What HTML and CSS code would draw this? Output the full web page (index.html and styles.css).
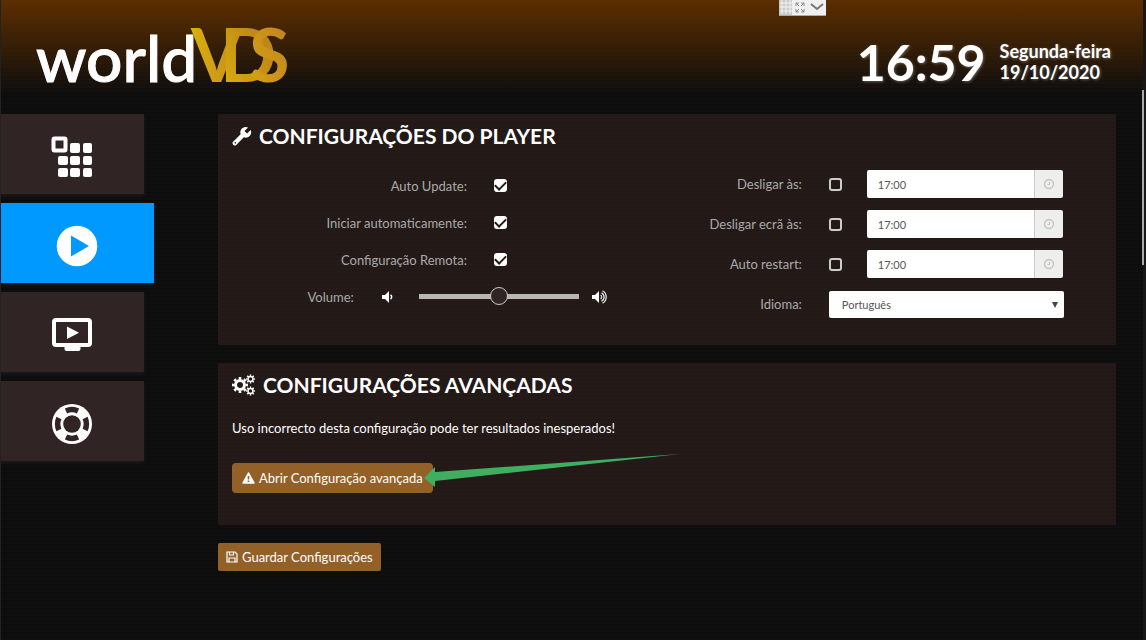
FILE: index.html
```html
<!DOCTYPE html>
<html lang="pt">
<head>
    <meta charset="utf-8">
    <title>worldVDS Player</title>
    <link rel="stylesheet" href="styles.css">
</head>
<body>

<div class="window-bar">
    <svg width="47" height="16" viewBox="0 0 47 16">
        <rect width="47" height="16" fill="#f0f0f0"/>
        <rect width="13" height="16" fill="#c9c9c9"/>
        <path d="M3 0v14M7 0v14M11 0v14M1 3h12M1 7h12M1 11h12" stroke="#f4f4f4" stroke-width="1"/>
        <path d="M17 6V3h3M22 3h3v3M25 9v3h-3M20 12h-3V9M17 3l3 3M25 3l-3 3M25 12l-3-3M17 12l3-3" fill="none" stroke="#8a8a8a"/>
        <path d="M32 4l6 5 6-5" fill="none" stroke="#777" stroke-width="2"/>
        <path d="M0 15.500h47" stroke="#aaa"/>
    </svg>
</div>

<header class="header">
    <svg class="logo" width="256" height="64" viewBox="0 0 256 64" role="img" aria-label="worldVDS">
        <defs>
            <linearGradient id="goldV" x1="0" y1="0" x2="1" y2="0">
                <stop offset="0" stop-color="#d9b00c"/>
                <stop offset="1" stop-color="#c48a1c"/>
            </linearGradient>
            <linearGradient id="goldD" x1="0" y1="1" x2="1" y2="0">
                <stop offset="0" stop-color="#ddb20a"/>
                <stop offset="1" stop-color="#b3751c"/>
            </linearGradient>
            <linearGradient id="goldS" x1="0" y1="1" x2="1" y2="0">
                <stop offset="0" stop-color="#d6a610"/>
                <stop offset="1" stop-color="#bf7f22"/>
            </linearGradient>
        </defs>
        <text class="logo-world" x="0" y="58">world</text>
        <text class="logo-vds" x="155" y="58" fill="url(#goldV)">V</text>
        <text class="logo-vds" x="184" y="58" fill="url(#goldD)">D</text>
        <text class="logo-vds" x="213" y="58" fill="url(#goldS)">S</text>
    </svg>
    <div class="datetime">
        <div class="clock">16:59</div>
        <div class="date">Segunda-feira<br>19/10/2020</div>
    </div>
</header>

<div class="layout">
    <nav class="menu">
        <a href="#apps" class="menu-item" aria-label="Apps">
            <svg width="42" height="42" viewBox="0 0 42 42" fill="#fff">
                <rect x="2.500" y="2.500" width="12" height="12" rx="1" fill="none" stroke="#fff" stroke-width="4"/>
                <rect x="19" y="7" width="10" height="10" rx="2"/>
                <rect x="32" y="7" width="9" height="10" rx="2"/>
                <rect x="7" y="20" width="10" height="9" rx="2"/>
                <rect x="19" y="20" width="10" height="9" rx="2"/>
                <rect x="32" y="20" width="9" height="9" rx="2"/>
                <rect x="7" y="32" width="10" height="9" rx="2"/>
                <rect x="19" y="32" width="10" height="9" rx="2"/>
                <rect x="32" y="32" width="9" height="9" rx="2"/>
            </svg>
        </a>
        <a href="#player" class="menu-item active" aria-label="Player">
            <svg width="42" height="42" viewBox="0 0 42 42">
                <circle cx="21" cy="21" r="20.300" fill="#fff"/>
                <path d="M15 10.500v21L33 21z" fill="#0099ff"/>
            </svg>
        </a>
        <a href="#tv" class="menu-item" aria-label="TV">
            <svg width="42" height="42" viewBox="0 0 42 42" fill="#fff">
                <rect x="3" y="6" width="36" height="25" rx="2" fill="none" stroke="#fff" stroke-width="4"/>
                <path d="M13.500 32h16v3a2 2 0 0 1-2 2h-12a2 2 0 0 1-2-2z"/>
                <path d="M16 12.500v12.500L28 18.700z"/>
            </svg>
        </a>
        <a href="#help" class="menu-item" aria-label="Ajuda">
            <svg width="42" height="42" viewBox="0 0 42 42">
                <circle cx="21" cy="21" r="20" fill="#fff"/>
                <circle cx="21" cy="21" r="8.800" fill="#312424"/>
                <circle cx="21" cy="21" r="14.400" fill="none" stroke="#312424" stroke-width="5.500" pathLength="80" stroke-dasharray="11 9" stroke-dashoffset="5.500"/>
            </svg>
        </a>
    </nav>

    <main class="content">
        <section class="panel">
            <h2>
                <svg width="20" height="20" viewBox="0 0 24 24">
                    <path fill="#fff" d="M1.300 19l9.100-9.100c-.9-2.300-.4-5 1.500-6.900 2-2 5-2.400 7.400-1.300L15 6l3 3 4.400-4.300c1.200 2.400.7 5.400-1.300 7.400-1.900 1.900-4.600 2.400-6.900 1.500l-9.100 9.100c-.9.900-2.300.9-3.200 0l-.6-.6c-.9-.9-.9-2.200 0-3.100z"/>
                    <circle cx="3.900" cy="20.200" r="1" fill="#231a18"/>
                </svg>
                CONFIGURAÇÕES DO PLAYER
            </h2>
            <form class="settings">
                <div class="col-left">
                    <div class="row">
                        <label for="autoUpdate">Auto Update:</label>
                        <input type="checkbox" id="autoUpdate" checked>
                    </div>
                    <div class="row">
                        <label for="autoStart">Iniciar automaticamente:</label>
                        <input type="checkbox" id="autoStart" checked>
                    </div>
                    <div class="row">
                        <label for="remoteConfig">Configuração Remota:</label>
                        <input type="checkbox" id="remoteConfig" checked>
                    </div>
                    <div class="row row-volume">
                        <label for="volume">Volume:</label>
                        <svg width="14" height="14" viewBox="0 0 14 14">
                            <path d="M1 5h3l4-4v12l-4-4H1z" fill="#fff"/>
                            <path d="M9.500 5a2.300 2.300 0 0 1 0 4" fill="none" stroke="#fff" stroke-width="1.500"/>
                        </svg>
                        <input type="range" id="volume" min="0" max="100" value="50">
                        <svg width="18" height="14" viewBox="0 0 18 14">
                            <path d="M1 5h3l4-4v12l-4-4H1z" fill="#fff"/>
                            <path d="M9.500 5a2.300 2.300 0 0 1 0 4M10.500 2.800a4.700 4.700 0 0 1 0 8.400M11.500.7a7.200 7.200 0 0 1 0 12.600" fill="none" stroke="#ddd" stroke-width="1.300"/>
                        </svg>
                    </div>
                </div>
                <div class="col-right">
                    <div class="row">
                        <label for="turnOff">Desligar às:</label>
                        <input type="checkbox" id="turnOff">
                        <div class="time">
                            <input type="text" value="17:00" aria-label="Hora de desligar">
                            <span class="addon"><svg width="12" height="12" viewBox="0 0 12 12" fill="none" stroke="#c4c4be"><circle cx="6" cy="6" r="4.500" stroke-width="1.300"/><path d="M6.500 3.500v3H4.500"/></svg></span>
                        </div>
                    </div>
                    <div class="row">
                        <label for="screenOff">Desligar ecrã às:</label>
                        <input type="checkbox" id="screenOff">
                        <div class="time">
                            <input type="text" value="17:00" aria-label="Hora de desligar ecrã">
                            <span class="addon"><svg width="12" height="12" viewBox="0 0 12 12" fill="none" stroke="#c4c4be"><circle cx="6" cy="6" r="4.500" stroke-width="1.300"/><path d="M6.500 3.500v3H4.500"/></svg></span>
                        </div>
                    </div>
                    <div class="row">
                        <label for="autoRestart">Auto restart:</label>
                        <input type="checkbox" id="autoRestart">
                        <div class="time">
                            <input type="text" value="17:00" aria-label="Hora de restart">
                            <span class="addon"><svg width="12" height="12" viewBox="0 0 12 12" fill="none" stroke="#c4c4be"><circle cx="6" cy="6" r="4.500" stroke-width="1.300"/><path d="M6.500 3.500v3H4.500"/></svg></span>
                        </div>
                    </div>
                    <div class="row">
                        <label for="language">Idioma:</label>
                        <div class="select">
                            <select id="language">
                                <option>Português</option>
                            </select>
                        </div>
                    </div>
                </div>
            </form>
        </section>

        <section class="panel panel-advanced">
            <h2>
                <svg width="24" height="22" viewBox="0 0 24 22" fill="none" stroke="#fff">
                    <circle cx="8" cy="11" r="4.500" stroke-width="3"/>
                    <circle cx="8" cy="11" r="6.800" stroke-width="2.400" pathLength="64" stroke-dasharray="4 4" stroke-dashoffset="2"/>
                    <circle cx="18.500" cy="5" r="2.500" stroke-width="1.500"/>
                    <circle cx="18.500" cy="5" r="3.800" stroke-width="1.600" pathLength="64" stroke-dasharray="4 4" stroke-dashoffset="2"/>
                    <circle cx="18.500" cy="17" r="2.500" stroke-width="1.500"/>
                    <circle cx="18.500" cy="17" r="3.800" stroke-width="1.600" pathLength="64" stroke-dasharray="4 4" stroke-dashoffset="2"/>
                </svg>
                CONFIGURAÇÕES AVANÇADAS
            </h2>
            <p>Uso incorrecto desta configuração pode ter resultados inesperados!</p>
            <div class="advanced">
                <button type="button" class="btn btn-advanced">
                    <svg width="13" height="12" viewBox="0 0 13 12">
                        <path d="M6.500 1L12 11H1z" fill="#fff" stroke="#fff" stroke-width="1.500" stroke-linejoin="round"/>
                        <path d="M6.500 4v3.500M6.500 8.500v1.500" stroke="#936027" stroke-width="1.600"/>
                    </svg>
                    Abrir Configuração avançada
                </button>
                <svg class="arrow" width="258" height="36" viewBox="0 0 258 36">
                    <path d="M0 25L11 14v5L256 1 11 28v6z" fill="#3fae60"/>
                </svg>
            </div>
        </section>

        <button type="button" class="btn">
            <svg width="12" height="12" viewBox="0 0 12 12" fill="none" stroke="#fff" stroke-width="1.200">
                <path d="M1 1h8l2 2v8H1zM3.500 1v3h4V1M3 11V7h6v4"/>
            </svg>
            Guardar Configurações
        </button>
    </main>
</div>

<div class="scrollbar"></div>

</body>
</html>
```
FILE: styles.css
```css
* {
    box-sizing: border-box;
}

body {
    margin: 0;
    min-height: 100vh;
    border-left: 1px solid #222;
    border-right: 3px solid #171717;
    background-color: #0e0e0e;
    background-image:
        linear-gradient(#5c2e00, rgba(14, 14, 14, 0) 94px),
        repeating-linear-gradient(#0c0c0c 0, #0c0c0c 1px, #0f0f0f 2px, #0f0f0f 4px);
    color: #fff;
    font-family: Lato, sans-serif;
    font-size: 13px;
}

.window-bar {
    position: absolute;
    top: 0;
    left: 68%;
    height: 16px;
}

svg {
    flex: none;
}

.header {
    display: flex;
    justify-content: space-between;
    align-items: flex-start;
    height: 114px;
    padding: 24px 32px 0 35px;
}

.logo {
    overflow: visible;
}

.logo-world {
    font-family: "Lato Medium", Lato, sans-serif;
    font-size: 64px;
    fill: #fff;
    stroke: #fff;
    stroke-width: 1px;
}

.logo-vds {
    font-family: Lato, sans-serif;
    font-size: 74px;
    font-weight: bold;
}

.datetime {
    display: flex;
    align-items: center;
    gap: 14px;
    padding-top: 10px;
    font-weight: bold;
    text-shadow: 1px 1px 3px rgba(255, 255, 255, 0.3);
}

.clock {
    font-size: 50px;
    line-height: 56px;
}

.date {
    font-size: 18px;
    line-height: 21px;
}

.layout {
    display: flex;
}

.menu {
    display: flex;
    flex: none;
    flex-direction: column;
    gap: 9px;
    width: 217px;
}

.menu-item {
    display: flex;
    align-items: center;
    justify-content: center;
    width: 143px;
    height: 80px;
    padding: 5px 2px 0 0;
    background: #312424;
    box-shadow: 0 2px 4px #1c1c1c;
}

.menu-item.active {
    width: 153px;
    background: #0099ff;
}

.content {
    flex: 1;
    padding-right: 27px;
}

.panel {
    margin-bottom: 18px;
    padding: 8px 14px 21px;
    background: repeating-linear-gradient(#211817 0, #211817 1px, #241b19 2px, #241b19 4px);
}

.panel-advanced {
    padding-bottom: 32px;
}

.panel h2 {
    display: flex;
    align-items: center;
    gap: 7px;
    margin: 0;
    font-size: 21px;
    line-height: 28px;
}

.panel p {
    margin: 18px 0 24px;
    line-height: 22px;
}

.settings {
    display: grid;
    grid-template-columns: 1fr 1fr;
    padding-top: 14px;
}

.row {
    display: flex;
    align-items: center;
    height: 40px;
    color: #aaa;
}

.row label {
    margin-right: 27px;
    text-align: right;
}

.col-left {
    padding-top: 3px;
}

.col-left .row {
    height: 37px;
}

.col-left label {
    width: 54%;
}

.col-left .row-volume label {
    width: 28%;
}

.col-right label {
    width: 31%;
}

input[type="checkbox"] {
    display: flex;
    align-items: center;
    justify-content: center;
    flex: none;
    appearance: none;
    width: 13px;
    height: 13px;
    margin: 0;
    border: 2px solid #ccc;
    border-radius: 3px;
}

input[type="checkbox"]:checked {
    border-color: #fff;
    background: #fff;
}

input[type="checkbox"]:checked::after {
    content: "";
    flex: none;
    width: 9px;
    height: 5px;
    margin-top: -3px;
    border-left: 2px solid #231a18;
    border-bottom: 2px solid #231a18;
    transform: rotate(-45deg);
}

input[type="range"] {
    appearance: none;
    width: 160px;
    height: 18px;
    margin: 0 12px 0 24px;
    background: none;
}

input[type="range"]::-webkit-slider-runnable-track {
    height: 5px;
    background: #bbb5b2;
}

input[type="range"]::-webkit-slider-thumb {
    appearance: none;
    width: 18px;
    height: 18px;
    margin-top: -7px;
    border: 1px solid #ccc;
    border-radius: 50%;
    background: #312424;
}

.time {
    display: flex;
    flex: 1;
    height: 28px;
    margin: 0 39px 0 25px;
    overflow: hidden;
    border-radius: 2px;
}

.time input {
    flex: 1;
    min-width: 0;
    padding: 0 11px;
    border: 0;
    background: #fff;
    color: #555;
    font-family: inherit;
    font-size: 11px;
}

.addon {
    display: flex;
    align-items: center;
    justify-content: center;
    width: 29px;
    border-left: 1px solid #ccc;
    background: #eee;
}

.select {
    position: relative;
    flex: 1;
    margin-right: 38px;
}

.select select {
    display: block;
    appearance: none;
    width: 100%;
    height: 27px;
    padding: 0 13px;
    border: 0;
    border-radius: 2px;
    background: #fff;
    color: #555;
    font-family: inherit;
    font-size: 11px;
}

.select::after {
    content: "";
    position: absolute;
    top: 11px;
    right: 6px;
    border-left: 3px solid transparent;
    border-right: 3px solid transparent;
    border-top: 6px solid #444;
}

.btn {
    display: inline-flex;
    align-items: center;
    gap: 4px;
    height: 28px;
    padding: 0 8px;
    border: 0;
    border-radius: 2px;
    background: #936027;
    color: #fff;
    font-family: inherit;
    font-size: 13px;
}

.btn-advanced {
    height: 30px;
    padding: 0 10px;
    border-radius: 4px;
}

.advanced {
    display: inline-block;
    position: relative;
}

.arrow {
    position: absolute;
    left: 192px;
    top: -10px;
}

.scrollbar {
    position: absolute;
    top: 90px;
    right: 2px;
    width: 2px;
    height: 175px;
    background: #aaa;
}
```
